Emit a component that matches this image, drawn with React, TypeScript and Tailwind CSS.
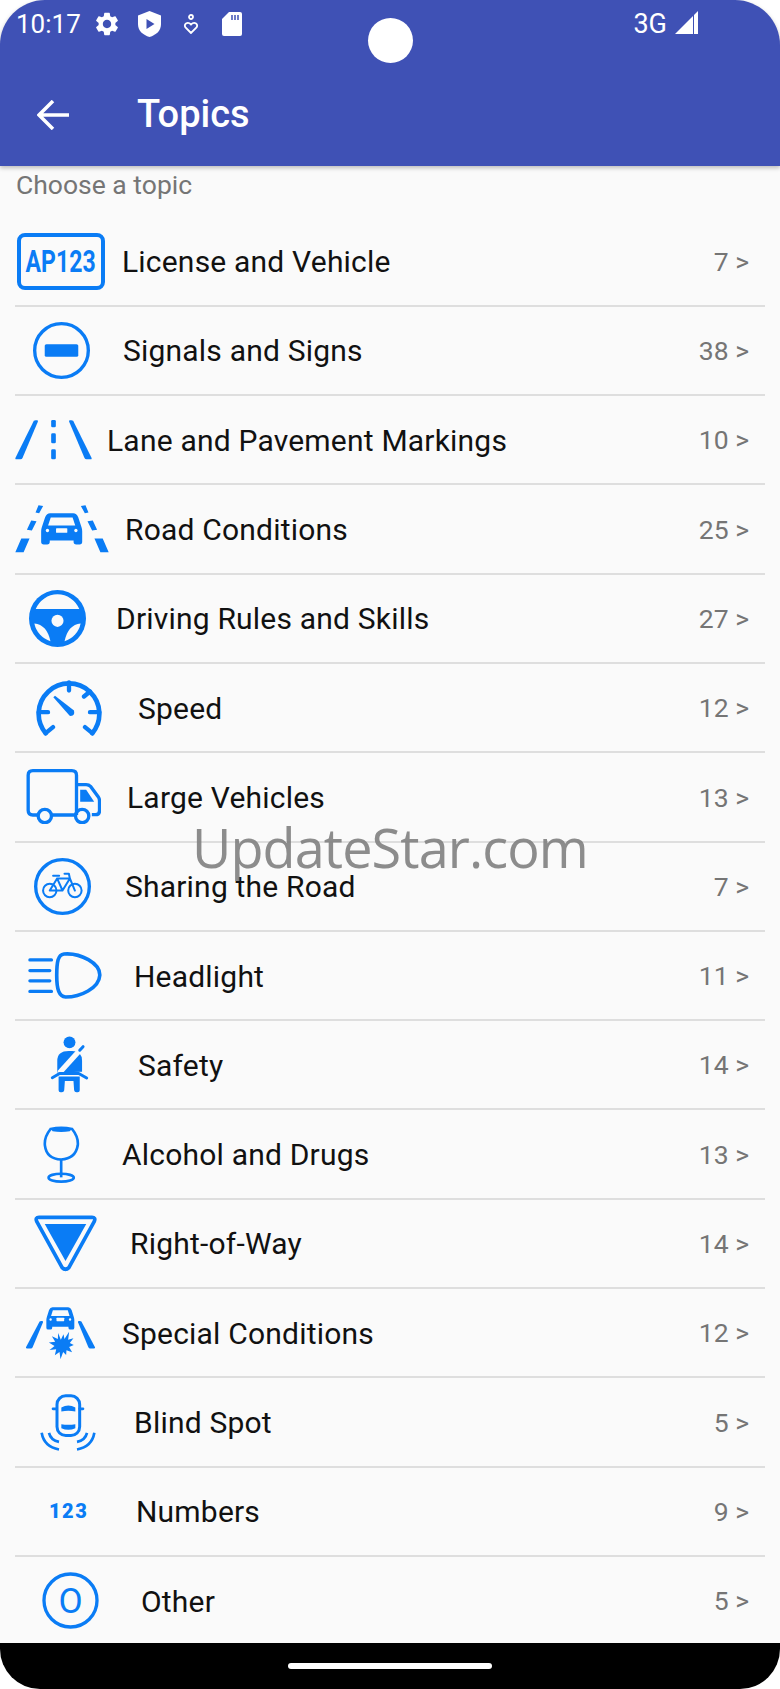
import type { ReactNode } from 'react'

const BLUE = '#0a7cf5'
const BG = '#fafafa'

/* ─── Topic icons, drawn in 3x coordinates ─────────────────── */
function Ico({ vb, w, h, children }: { vb: string; w: number; h: number; children: ReactNode }) {
  return (
    <svg viewBox={vb} width={w} height={h} fill="none" className="shrink-0">
      {children}
    </svg>
  )
}

const carShape = 'M150 880h70q10 0 15 12l10 30q2 6 2 12v32q0 8-8 8h-10q-8 0-8-8v-4h-72v4q0 8-8 8h-10q-8 0-8-8v-32q0-6 2-12l10-30q5-12 15-12z'

function Car() {
  return (
    <>
      <path d={carShape} fill={BLUE} />
      <path d="M152 893h66l8 24h-82z" fill={BG} />
      <circle cx="142" cy="932" r="5" fill={BG} />
      <circle cx="228" cy="932" r="5" fill={BG} />
      <rect x="168" y="925" width="34" height="14" rx="2" fill={BG} />
    </>
  )
}

const icons: Record<string, ReactNode> = {
  license: (
    <div className="flex items-center justify-center h-[57px] w-[88px] rounded-[8px] border-[4px] border-[#0a7cf5] text-[#0a7cf5]">
      <span className="shrink-0 scale-x-[0.72] text-[32px] leading-none font-bold whitespace-nowrap">AP123</span>
    </div>
  ),
  signals: (
    <Ico vb="99 306 170 170" w={57} h={57}>
      <circle cx="184" cy="391" r="80" stroke={BLUE} strokeWidth="10" />
      <rect x="134" y="372" width="100" height="38" rx="5" fill={BLUE} />
    </Ico>
  ),
  lane: (
    <Ico vb="45 600 230 120" w={77} h={40}>
      <path d="M101 602q2-2 10-1 3 1 2 4L67 714q-2 4-6 4H49q-5 0-3-5z" fill={BLUE} />
      <path d="M219 602q-2-2-10-1-3 1-2 4l46 109q2 4 6 4h12q5 0 3-5z" fill={BLUE} />
      <rect x="153" y="600" width="14" height="22" rx="4" fill={BLUE} />
      <rect x="153" y="640" width="14" height="30" rx="4" fill={BLUE} />
      <rect x="153" y="688" width="14" height="30" rx="4" fill={BLUE} />
    </Ico>
  ),
  road: (
    <Ico vb="45 855 282 145" w={94} h={48}>
      <path d="M115 856l14 2-12 22-11-2zM93 902l16 2-14 28-15-2zM63 956h25L70 998H45z" fill={BLUE} />
      <path d="M257 856l-14 2 12 22 11-2zM279 902l-16 2 14 28 15-2zM284 956h25l18 42h-25z" fill={BLUE} />
      <Car />
    </Ico>
  ),
  wheel: (
    <Ico vb="88 30 170 170" w={57} h={57}>
      <circle cx="173" cy="115" r="85" fill={BLUE} />
      <path d="M108 87A70 70 0 0 1 238 87z" fill={BG} />
      <path d="M104 130Q142 134 152 183A70 70 0 0 1 104 130z" fill={BG} />
      <path d="M242 130Q204 134 194 183A70 70 0 0 0 242 130z" fill={BG} />
      <circle cx="173" cy="122" r="18" fill={BG} />
    </Ico>
  ),
  speed: (
    <Ico vb="108 298 198 170" w={66} h={57}>
      <path d="M137 460A91 91 0 1 1 277 460" stroke={BLUE} strokeWidth="14" strokeLinecap="round" />
      <path d="M137 460l22-18M277 460l-22-18M207 308v24M116 397h28M298 397h-28M252 350l18-15" stroke={BLUE} strokeWidth="13" strokeLinecap="round" />
      <path d="M160 352l5-4 57 44q4 18-13 16z" fill={BLUE} />
    </Ico>
  ),
  truck: (
    <Ico vb="78 570 224 165" w={75} h={55}>
      <path d="M113 708H98q-14 0-14-14V589q0-14 14-14h117q14 0 14 14v119M156 708h68M229 617h29q8 0 14 6l22 30q4 6 4 12v30q0 12-12 12h-11" stroke={BLUE} strokeWidth="10" strokeLinejoin="round" />
      <circle cx="134" cy="711" r="20" stroke={BLUE} strokeWidth="10" />
      <circle cx="246" cy="711" r="20" stroke={BLUE} strokeWidth="10" />
      <path d="M240 632h18l24 36h-42z" fill={BLUE} />
    </Ico>
  ),
  bike: (
    <Ico vb="103 833 170 170" w={57} h={57}>
      <circle cx="188" cy="918" r="80" stroke={BLUE} strokeWidth="10" />
      <g stroke={BLUE} strokeWidth="6" strokeLinecap="round" strokeLinejoin="round">
        <circle cx="150" cy="930" r="20" />
        <circle cx="225" cy="930" r="20" />
        <path d="M150 930l22-36h38l15 36M172 894l16 36h-38M188 930l22-36M160 886h18M194 880h13l3 14" />
      </g>
    </Ico>
  ),
  headlight: (
    <Ico vb="82 36 222 142" w={74} h={47}>
      <path d="M190 42C240 38 300 70 298 107 296 145 240 172 195 172 175 170 168 150 168 107 168 65 172 44 190 42z" stroke={BLUE} strokeWidth="11" />
      <path d="M87 60h65M87 92h60M87 123h60M87 155h65" stroke={BLUE} strokeWidth="10" strokeLinecap="round" />
    </Ico>
  ),
  safety: (
    <Ico vb="148 290 118 172" w={39} h={57}>
      <circle cx="207" cy="309" r="18" fill={BLUE} />
      <path d="M170 400v-35q0-30 35-30h10q30 0 30 30v33z" fill={BLUE} />
      <path d="M250 320L176 402" stroke={BG} strokeWidth="16" />
      <path d="M248 322l-10 11M155 416l22-13h58l24 14" stroke={BLUE} strokeWidth="9" strokeLinecap="round" strokeLinejoin="round" />
      <path d="M174 412h64v42q0 6-6 6h-4q-6 0-7-6l-2-28h-26l-2 28q-1 6-7 6h-4q-6 0-6-6z" fill={BLUE} />
    </Ico>
  ),
  wine: (
    <Ico vb="128 556 110 172" w={37} h={57}>
      <path d="M150 565Q182 558 215 565 235 590 232 615 225 655 182 657 138 655 133 615 130 590 150 565z" stroke={BLUE} strokeWidth="8" />
      <path d="M152 566Q182 560 213 566L208 572Q182 576 156 572z" fill={BLUE} />
      <path d="M182 657v54" stroke={BLUE} strokeWidth="8" />
      <ellipse cx="182" cy="712" rx="38" ry="12" stroke={BLUE} strokeWidth="8" />
    </Ico>
  ),
  yield: (
    <Ico vb="100 825 188 170" w={63} h={57}>
      <path d="M115 832h158q12 0 7 12l-76 138q-10 10-20 0L108 844q-5-12 7-12z" stroke={BLUE} strokeWidth="11" strokeLinejoin="round" />
      <path d="M132 852h124l-62 110z" fill={BLUE} />
    </Ico>
  ),
  special: (
    <Ico vb="78 30 208 156" w={69} h={52}>
      <g transform="translate(181.500 30) scale(0.68 0.72) translate(-185 -880)">
        <Car />
      </g>
      <path d="M119 73q2-2 8-1 3 1 2 4L98 151q-2 4-5 4H81q-4 0-3-4z" fill={BLUE} />
      <path d="M245 73q-2-2-8-1-3 1-2 4l31 75q2 4 5 4h12q4 0 3-4z" fill={BLUE} />
      <path d="M183 128l8-16 3 14 14-22-3 24 16-4-11 14 12 6-14 6 9 16-17-6-1 14-9-9-8 22-3-22-14 10 4-18-20 2 15-12-17-10 19-3-10-16 18 8 1-18z" fill={BLUE} />
    </Ico>
  ),
  blind: (
    <Ico vb="118 282 168 170" w={56} h={57}>
      <rect x="169" y="287" width="68" height="119" rx="26" stroke={BLUE} strokeWidth="9" />
      <path d="M182 322q21-12 42 0v12q-21-4-42 0z" fill={BLUE} />
      <path d="M182 372q21 4 42 0v12q-21 10-42 0z" fill={BLUE} />
      <path d="M157 326h10M237 326h10" stroke={BLUE} strokeWidth="8" strokeLinecap="round" />
      <path d="M123 398Q130 440 175 448M145 398Q150 420 175 425M281 398Q274 440 229 448M259 398Q254 420 229 425" stroke={BLUE} strokeWidth="8" />
    </Ico>
  ),
  numbers: (
    <div className="w-[38px] text-center text-[20px] leading-none font-black tracking-[1.5px] text-[#0a7cf5]">123</div>
  ),
  other: (
    <Ico vb="125 816 172 172" w={57} h={57}>
      <circle cx="211" cy="902" r="80" stroke={BLUE} strokeWidth="10" />
      <text x="211" y="939" textAnchor="middle" fill={BLUE} fontFamily="Roboto, sans-serif" fontWeight="400" fontSize="106">O</text>
    </Ico>
  ),
}

/* ─── Rows ─────────────────────────────────────────────────── */
const topics = [
  { icon: 'license', label: 'License and Vehicle', count: 7, cls: 'ml-[2px] mr-[17px]' },
  { icon: 'signals', label: 'Signals and Signs', count: 38, cls: 'ml-[18px] mr-[33px]' },
  { icon: 'lane', label: 'Lane and Pavement Markings', count: 10, cls: 'ml-[0px] mr-[15px]' },
  { icon: 'road', label: 'Road Conditions', count: 25, cls: 'ml-[0px] mr-[16px]' },
  { icon: 'wheel', label: 'Driving Rules and Skills', count: 27, cls: 'ml-[14px] mr-[30px]' },
  { icon: 'speed', label: 'Speed', count: 12, cls: 'ml-[21px] mr-[36px]' },
  { icon: 'truck', label: 'Large Vehicles', count: 13, cls: 'ml-[11px] mr-[26px]' },
  { icon: 'bike', label: 'Sharing the Road', count: 7, cls: 'ml-[19px] mr-[34px]' },
  { icon: 'headlight', label: 'Headlight', count: 11, cls: 'ml-[13px] mr-[32px]' },
  { icon: 'safety', label: 'Safety', count: 14, cls: 'ml-[35px] mr-[49px]' },
  { icon: 'wine', label: 'Alcohol and Drugs', count: 13, cls: 'ml-[28px] mr-[42px]' },
  { icon: 'yield', label: 'Right-of-Way', count: 14, cls: 'ml-[19px] mr-[33px]' },
  { icon: 'special', label: 'Special Conditions', count: 12, cls: 'ml-[11px] mr-[27px]' },
  { icon: 'blind', label: 'Blind Spot', count: 5, cls: 'ml-[25px] mr-[38px]' },
  { icon: 'numbers', label: 'Numbers', count: 9, cls: 'ml-[34px] mr-[49px]' },
  { icon: 'other', label: 'Other', count: 5, cls: 'ml-[27px] mr-[42px]' },
]

function StatusBar() {
  return (
    <div className="flex items-center h-[46px] pl-4 pr-[82px] pt-[2px] text-white text-[26px]">
      <span>10:17</span>
      <svg viewBox="0 0 24 24" width="28" height="28" fill="white" className="ml-[12px]">
        <path d="M19.14 12.94c.04-.3.06-.61.06-.94 0-.32-.02-.64-.07-.94l2.03-1.58c.18-.14.23-.41.12-.61l-1.92-3.32c-.12-.22-.37-.29-.59-.22l-2.39.96c-.5-.38-1.03-.7-1.62-.94l-.36-2.54c-.04-.24-.24-.41-.48-.41h-3.84c-.24 0-.43.17-.47.41l-.36 2.54c-.59.24-1.13.57-1.62.94l-2.39-.96c-.22-.08-.47 0-.59.22L2.74 8.87c-.12.21-.08.47.12.61l2.03 1.58c-.05.3-.09.63-.09.94s.02.64.07.94l-2.03 1.58c-.18.14-.23.41-.12.61l1.92 3.32c.12.22.37.29.59.22l2.39-.96c.5.38 1.03.7 1.62.94l.36 2.54c.05.24.24.41.48.41h3.84c.24 0 .44-.17.47-.41l.36-2.54c.59-.24 1.13-.56 1.62-.94l2.39.96c.22.08.47 0 .59-.22l1.92-3.32c.12-.22.07-.47-.12-.61l-2.01-1.58zM12 15.6c-1.98 0-3.6-1.62-3.6-3.6s1.62-3.6 3.6-3.6 3.6 1.62 3.6 3.6-1.62 3.6-3.6 3.6z" />
      </svg>
      <svg viewBox="0 0 23 26" width="23" height="26" className="ml-[17px]">
        <path d="M11.500 0L23 4.500V13c0 7-5 11-11.500 13C5 24 0 20 0 13V4.500z" fill="white" />
        <path d="M8.500 8l8 5-8 5z" fill="#3f51b5" />
      </svg>
      <svg viewBox="0 0 16 20" width="16" height="20" fill="none" stroke="white" strokeWidth="1.800" className="ml-[22px]">
        <circle cx="8" cy="3" r="2" />
        <path d="M8 19L2.500 13.500Q1 11 3 9.500 5.500 8 8 10.500 10.500 8 13 9.500 15 11 13.500 13.500z" />
      </svg>
      <svg viewBox="0 0 20 24" width="20" height="24" className="ml-[23px]">
        <path d="M7 0h11q2 0 2 2v20q0 2-2 2H2q-2 0-2-2V7z" fill="white" />
        <path d="M10 3v5M13 3v5M16 3v5" stroke="#3f51b5" strokeWidth="1.500" />
      </svg>
      <span className="ml-auto text-[27px]">3G</span>
      <svg viewBox="0 0 23 23" width="23" height="23" className="ml-[8px] -mt-[4px]">
        <path d="M0 23L18 5v18zM19 4l4-4v23h-4z" fill="white" />
      </svg>
    </div>
  )
}

export default function App() {
  return (
    <div className="relative flex flex-col h-[1689px] w-[780px] overflow-hidden bg-white font-['Roboto',sans-serif]">
      {/* Header */}
      <header className="shrink-0 h-[166px] rounded-t-[45px] bg-[#3f51b5] shadow-[0_2px_4px_rgba(0,0,0,0.25)] z-10">
        <StatusBar />
        <div className="flex items-center h-[120px] pt-[17px] pl-[37px] text-white">
          <svg viewBox="0 0 32 30" width="32" height="30" fill="none" stroke="white" strokeWidth="3.500">
            <path d="M32 15H3M16 1L2 15l14 14" />
          </svg>
          <h1 className="ml-[68px] text-[38px] font-medium">Topics</h1>
        </div>
      </header>

      {/* Topic list */}
      <main className="flex-1 min-h-0 overflow-hidden bg-[#fafafa] px-[15px]">
        <p className="h-[52.5px] -mt-px pl-px text-[26.5px] text-[#757575]">Choose a topic</p>
        {topics.map(t => (
          <div key={t.label} className="flex items-center h-[89.3px] border-b-2 border-[#dedede] pr-[16px]">
            <div className={t.cls}>{icons[t.icon]}</div>
            <span className="pt-px text-[30px] tracking-[0.2px] text-[#111]">{t.label}</span>
            <span className="ml-auto pt-px text-[26.5px] text-[#757575]">{t.count} &gt;</span>
          </div>
        ))}
      </main>

      {/* Nav bar */}
      <footer className="shrink-0 flex items-center justify-center h-[46px] rounded-b-[40px] bg-black">
        <div className="h-[6px] w-[204px] rounded-full bg-white" />
      </footer>

      {/* Camera cutout */}
      <div className="absolute left-[368px] top-[18px] h-[45px] w-[45px] rounded-full bg-white z-20" />
      {/* Watermark */}
      <div className="absolute left-[192px] top-[807px] text-[54px] tracking-[-0.9px] text-[#808080]/90 font-['Open_Sans',sans-serif] z-20">UpdateStar.com</div>
    </div>
  )
}
